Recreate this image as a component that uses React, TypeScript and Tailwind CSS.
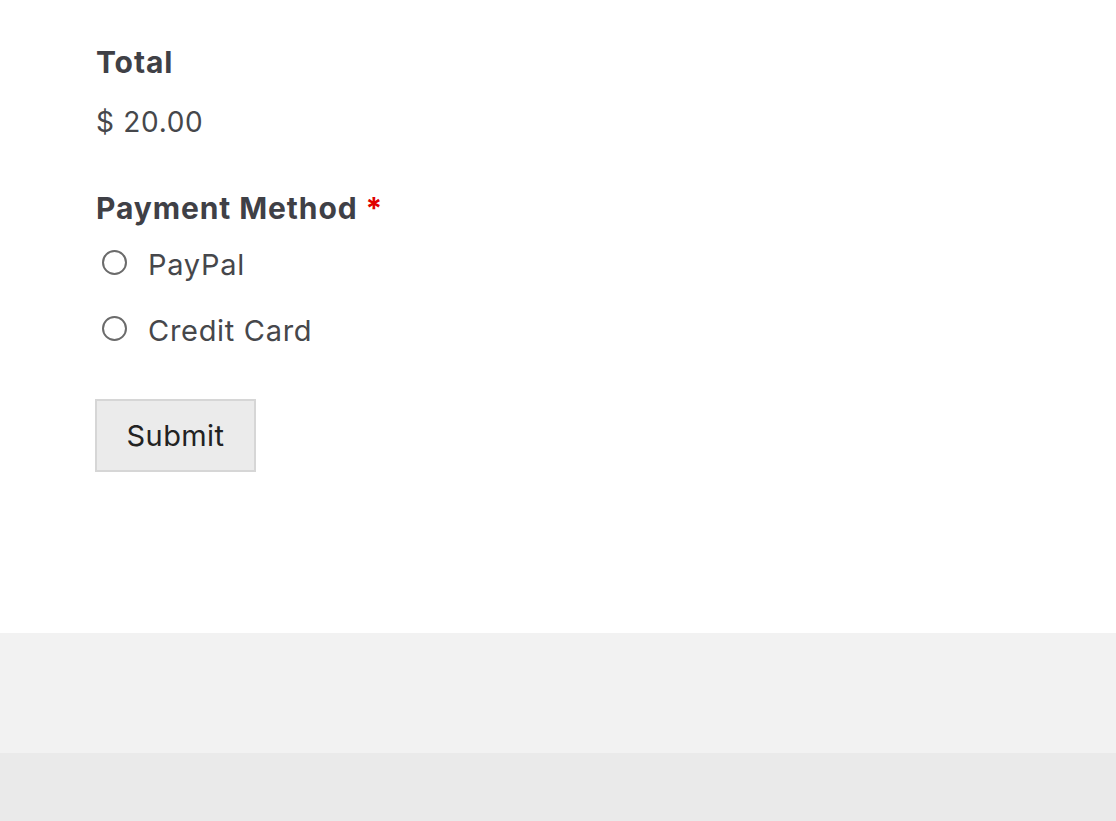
export default function App() {
  return (
    <div className="min-h-[821px] flex flex-col bg-white font-['Inter',sans-serif] text-[#46474b]">
      <div className="h-[633px] pl-[96px] pt-[44px]">
        <h3 className="text-[30px] leading-[36px] font-bold tracking-[0.9px] text-[#3f4046]">Total</h3>
        <p className="mt-[24px] text-[28px] leading-[36px] tracking-[0.7px]">$ 20.00</p>

        <h3 className="mt-[50px] text-[30px] leading-[36px] font-bold tracking-[0.9px] text-[#3f4046]">
          Payment Method <span className="text-[#e00000]">*</span>
        </h3>
        <ul className="mt-[21px] flex flex-col gap-[30px]">
          <li className="flex items-start gap-[21px]">
            <span className="mt-[3px] ml-[6px] w-[25px] h-[25px] rounded-full border-2 border-[#6b6b6b] bg-white" />
            <span className="text-[29px] leading-[36px] tracking-[0.7px]">PayPal</span>
          </li>
          <li className="flex items-start gap-[21px]">
            <span className="mt-[3px] ml-[6px] w-[25px] h-[25px] rounded-full border-2 border-[#6b6b6b] bg-white" />
            <span className="text-[29px] leading-[36px] tracking-[0.7px]">Credit Card</span>
          </li>
        </ul>

        <button className="mt-[50px] -ml-px w-[161px] h-[73px] bg-[#ebebeb] border-2 border-[#d6d6d6] text-[29px] tracking-[0.4px] text-[#222]">
          Submit
        </button>
      </div>
      <div className="h-[120px] bg-[#f2f2f2]" />
      <div className="flex-1 bg-[#eaeaea]" />
    </div>
  );
}
